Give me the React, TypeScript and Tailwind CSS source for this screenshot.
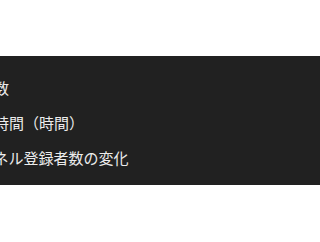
import React from 'react';

const metrics = ['視聴回数', '総再生時間（時間）', 'チャンネル登録者数の変化'];

const App: React.FC = () => {
  return (
    <div className="w-[320px] h-[242px] bg-white overflow-hidden" style={{ fontFamily: '"Noto Sans CJK JP", "Noto Sans", sans-serif' }}>
      <div className="mt-[56px] h-[129px] bg-[#212121] overflow-hidden">
        {/* metric list, scrolled off to the left */}
        <ul className="ml-[-51px] pt-[15px] flex flex-col">
          {metrics.map((m) => (
            <li key={m} className="h-[35px] flex items-center text-[15px] text-[#ececec] whitespace-nowrap">
              {m}
            </li>
          ))}
        </ul>
      </div>
    </div>
  );
};

export default App;
